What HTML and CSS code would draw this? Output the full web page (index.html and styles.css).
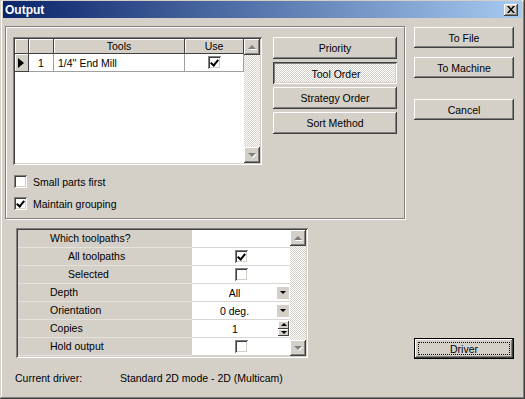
FILE: index.html
```html
<!DOCTYPE html>
<html lang="en">
<head>
<meta charset="UTF-8">
<title>Output</title>
<link rel="stylesheet" href="styles.css">
</head>
<body>

<div class="window">
  <div class="titlebar">
    <span class="title">Output</span>
    <span class="close">
      <svg width="8" height="7" viewBox="0 0 8 7"><path d="M0 0h2l2 2.5L6 0h2L5 3.5 8 7H6L4 4.5 2 7H0l3-3.5z" fill="#000"/></svg>
    </span>
  </div>

  <div class="client">
    <div class="main">

      <div class="group">
        <div class="group-top">
          <div class="tools sunken">
            <div class="tools-body">
              <div class="trow head">
                <div></div>
                <div></div>
                <div>Tools</div>
                <div>Use</div>
              </div>
              <div class="trow">
                <div class="indicator"><span class="tri-right"></span></div>
                <div class="num">1</div>
                <div class="name">1/4'' End Mill</div>
                <div class="use"><span class="box on"></span></div>
              </div>
            </div>
            <div class="vscroll">
              <div class="sbtn"><span class="arr-up"></span></div>
              <div class="track"></div>
              <div class="sbtn"><span class="arr-down"></span></div>
            </div>
          </div>

          <div class="sort-buttons">
            <button class="btn">Priority</button>
            <button class="btn pressed">Tool Order</button>
            <button class="btn">Strategy Order</button>
            <button class="btn">Sort Method</button>
          </div>
        </div>

        <label class="check first"><span class="box"></span>Small parts first</label>
        <label class="check"><span class="box on"></span>Maintain grouping</label>
      </div>

      <div class="props sunken">
        <div class="props-body">
          <div class="prow">
            <div class="plabel">Which toolpaths?</div>
            <div class="pvalue"></div>
          </div>
          <div class="prow">
            <div class="plabel sub">All toolpaths</div>
            <div class="pvalue"><span class="box on"></span></div>
          </div>
          <div class="prow">
            <div class="plabel sub">Selected</div>
            <div class="pvalue"><span class="box"></span></div>
          </div>
          <div class="prow">
            <div class="plabel">Depth</div>
            <div class="pvalue"><span class="val">All</span><span class="drop"><span class="arr-small"></span></span></div>
          </div>
          <div class="prow">
            <div class="plabel">Orientation</div>
            <div class="pvalue"><span class="val">0 deg.</span><span class="drop"><span class="arr-small"></span></span></div>
          </div>
          <div class="prow">
            <div class="plabel">Copies</div>
            <div class="pvalue"><span class="val">1</span><span class="spin"><span class="half"><span class="arr-small up"></span></span><span class="half"><span class="arr-small"></span></span></span></div>
          </div>
          <div class="prow">
            <div class="plabel">Hold output</div>
            <div class="pvalue"><span class="box"></span></div>
          </div>
        </div>
        <div class="vscroll">
          <div class="sbtn"><span class="arr-up"></span></div>
          <div class="track"></div>
          <div class="sbtn"><span class="arr-down"></span></div>
        </div>
      </div>

      <div class="status">
        <span class="status-label">Current driver:</span>
        <span>Standard 2D mode - 2D (Multicam)</span>
      </div>
    </div>

    <div class="side">
      <button class="btn to-file">To File</button>
      <button class="btn to-machine">To Machine</button>
      <button class="btn cancel">Cancel</button>
      <button class="btn driver">Driver</button>
    </div>
  </div>
</div>

</body>
</html>
```

FILE: styles.css
```css
* {
  box-sizing: border-box;
}
html, body {
  margin: 0;
}
body {
  background: #d4d0c8;
  font-family: "Liberation Sans", Arial, sans-serif;
  font-size: 10.5px;
  color: #000;
}

/* ventana */
.window {
  width: 525px;
  height: 399px;
  padding: 1px 3px 3px 3px;
  background: #d4d0c8;
  box-shadow: inset -1px -1px #404040, inset 1px 1px #d4d0c8, inset -2px -2px #808080, inset 2px 2px #fff;
  display: flex;
  flex-direction: column;
}
.titlebar {
  height: 17px;
  background: linear-gradient(90deg, #0a246a, #a6caf0);
  display: flex;
  align-items: center;
  justify-content: space-between;
  padding: 0 4px 0 2px;
}
.title {
  color: #fff;
  font-weight: bold;
  font-size: 12px;
}
.close {
  width: 14px;
  height: 12px;
  background: #d4d0c8;
  box-shadow: inset -1px -1px #404040, inset 1px 1px #fff, inset -2px -2px #808080;
  display: flex;
  align-items: center;
  justify-content: center;
}

.client {
  flex: 1;
  display: flex;
  gap: 9px;
  padding: 8px 0 0 2px;
}
.main {
  width: 400px;
  display: flex;
  flex-direction: column;
}

/* botones */
.btn {
  height: 21px;
  padding: 0;
  border: 0;
  background: #d4d0c8;
  font: inherit;
  color: #000;
  box-shadow: inset -1px -1px #404040, inset 1px 1px #fff, inset -2px -2px #808080, inset 2px 2px #d4d0c8;
}
.btn.pressed {
  padding: 2px 0 0 2px;
  background: repeating-conic-gradient(#fff 0 25%, #d4d0c8 0 50%) 0 0 / 2px 2px;
  box-shadow: inset 1px 1px #404040, inset -1px -1px #fff, inset 2px 2px #808080, inset -2px -2px #d4d0c8;
}

.sunken {
  background: #fff;
  padding: 2px;
  box-shadow: inset 1px 1px #808080, inset -1px -1px #fff, inset 2px 2px #404040, inset -2px -2px #d4d0c8;
}

/* caixa do grupo */
.group {
  height: 193px;
  border: 1px solid #808080;
  box-shadow: inset 1px 1px #fff, 1px 1px #fff;
  padding: 10px 0 0 7px;
}
.group-top {
  display: flex;
  gap: 11px;
}
.sort-buttons {
  width: 124px;
  display: flex;
  flex-direction: column;
  gap: 3px;
}
.sort-buttons .btn {
  height: 22px;
}

/* grade de ferramentas */
.tools {
  width: 249px;
  height: 128px;
  display: flex;
}
.tools-body {
  flex: 1;
}
.trow {
  display: grid;
  grid-template-columns: 14px 25px 131px 59px;
  height: 18px;
}
.trow > div {
  border-right: 1px solid #a0a0a0;
  border-bottom: 1px solid #a0a0a0;
  display: flex;
  align-items: center;
}
.trow.head {
  height: 15px;
}
.trow.head > div {
  background: #d4d0c8;
  box-shadow: inset 1px 1px #fff;
  border-color: #404040;
  justify-content: center;
}
.trow .indicator {
  background: #d4d0c8;
  box-shadow: inset 1px 1px #fff;
  border-color: #404040;
  padding-left: 3px;
}
.tri-right {
  width: 0;
  height: 0;
  border-top: 5px solid transparent;
  border-bottom: 5px solid transparent;
  border-left: 6px solid #000;
}
.trow .num {
  justify-content: center;
}
.trow .name {
  padding-left: 4px;
}
.trow .use {
  justify-content: center;
}

/* barra de rolagem */
.vscroll {
  width: 16px;
  display: flex;
  flex-direction: column;
}
.track {
  flex: 1;
  background: repeating-conic-gradient(#fff 0 25%, #d4d0c8 0 50%) 0 0 / 2px 2px;
}
.sbtn {
  height: 16px;
  background: #d4d0c8;
  box-shadow: inset -1px -1px #404040, inset 1px 1px #fff, inset -2px -2px #808080, inset 2px 2px #d4d0c8;
  display: flex;
  align-items: center;
  justify-content: center;
}
.arr-up, .arr-down {
  width: 0;
  height: 0;
  border-left: 4px solid transparent;
  border-right: 4px solid transparent;
  filter: drop-shadow(1px 1px 0 #fff);
}
.arr-up {
  border-bottom: 4px solid #808080;
}
.arr-down {
  border-top: 4px solid #808080;
}

/* checkbox */
.box {
  position: relative;
  display: inline-block;
  width: 13px;
  height: 13px;
  flex: none;
  background: #fff;
  box-shadow: inset 1px 1px #808080, inset -1px -1px #fff, inset 2px 2px #404040, inset -2px -2px #d4d0c8;
}
.box.on::after {
  content: "";
  position: absolute;
  left: 4px;
  top: 2px;
  width: 3px;
  height: 6px;
  border: solid #000;
  border-width: 0 2px 2px 0;
  transform: rotate(40deg);
}
.check {
  display: flex;
  align-items: center;
  gap: 6px;
  height: 13px;
  margin-top: 9px;
  margin-left: 1px;
}
.check.first {
  margin-top: 10px;
}

/* propriedades */
.props {
  width: 292px;
  height: 130px;
  margin: 9px 0 0 11px;
  display: flex;
}
.props-body {
  flex: 1;
}
.prow {
  display: grid;
  grid-template-columns: 174px 98px;
  height: 18px;
}
.plabel {
  background: #d4d0c8;
  border-bottom: 1px solid #e4e2dc;
  padding-left: 32px;
  line-height: 17px;
}
.plabel.sub {
  padding-left: 50px;
}
.pvalue {
  border-bottom: 1px solid #d8d6d0;
  display: flex;
  align-items: center;
  justify-content: center;
}
.val {
  flex: 1;
  text-align: center;
}
.drop {
  width: 12px;
  height: 12px;
  margin-right: 1px;
  background: #d4d0c8;
  display: flex;
  align-items: center;
  justify-content: center;
}
.spin {
  width: 11px;
  height: 15px;
  margin-right: 1px;
  display: flex;
  flex-direction: column;
}
.spin .half {
  flex: 1;
  background: #d4d0c8;
  box-shadow: inset -1px -1px #404040, inset 1px 1px #fff;
  display: flex;
  align-items: center;
  justify-content: center;
}
.arr-small {
  width: 0;
  height: 0;
  border-left: 3px solid transparent;
  border-right: 3px solid transparent;
  border-top: 3px solid #000;
}
.arr-small.up {
  border-top: 0;
  border-bottom: 3px solid #000;
}

.status {
  display: flex;
  margin: 14px 0 0 10px;
}
.status-label {
  width: 105px;
}

/* coluna direita */
.side {
  width: 100px;
  display: flex;
  flex-direction: column;
}
.to-file {
  margin-top: 1px;
}
.to-machine {
  margin-top: 9px;
}
.cancel {
  margin-top: 21px;
}
.driver {
  position: relative;
  margin-top: 218px;
  box-shadow: inset 0 0 0 1px #000, inset -2px -2px #404040, inset 2px 2px #fff, inset -3px -3px #808080;
}
.driver::after {
  content: "";
  position: absolute;
  inset: 4px;
  border: 1px dotted #000;
}
```
